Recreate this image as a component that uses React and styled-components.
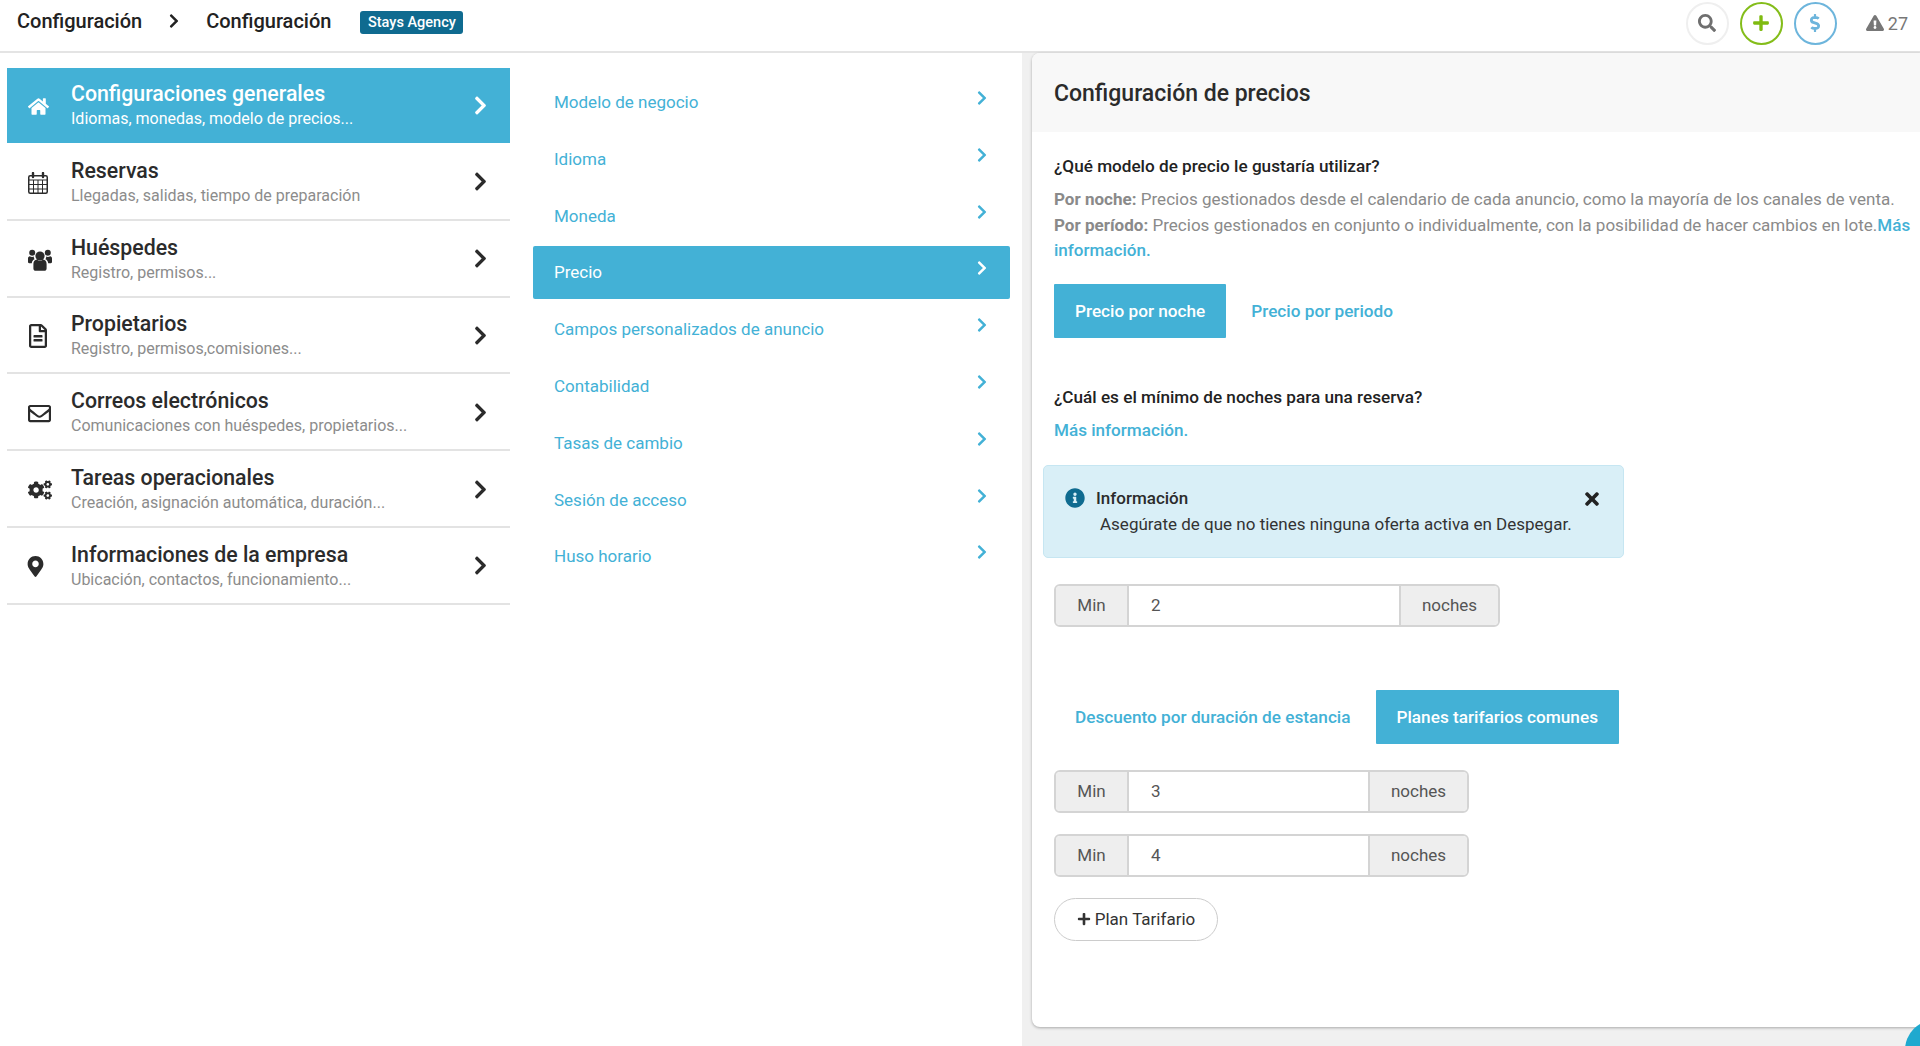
import React from 'react';
import styled, { createGlobalStyle } from 'styled-components';
import {
    FaHome, FaRegFileAlt, FaRegEnvelope, FaCogs, FaMapMarkerAlt,
    FaChevronRight, FaInfoCircle, FaTimes, FaPlus, FaSearch, FaDollarSign, FaExclamationTriangle,
} from 'react-icons/fa';

const BLUE = '#43b1d6';

const GlobalStyle = createGlobalStyle`
    html, body {
        margin: 0;
        padding: 0;
        background: #fff;
        font-family: Roboto, "Liberation Sans", sans-serif;
        color: #2b2b2b;
    }
    * { box-sizing: border-box; }
`;

const Page = styled.div`
    width: 1920px;
    height: 1046px;
    display: flex;
    flex-direction: column;
    overflow: hidden;
    position: relative;
`;

const Header = styled.header`
    height: 53px;
    flex: none;
    display: flex;
    align-items: center;
    padding: 0 12px 5px 17px;
    border-bottom: 2px solid #e4e4e4;
`;

const Crumb = styled.span`
    font-size: 20px;
    font-weight: 500;
    color: #222;
    position: relative;
    top: -2px;
`;

const CrumbArrow = styled(FaChevronRight)`
    font-size: 16px;
    color: #222;
    margin: 0 24px;
    position: relative;
    top: -2px;
`;

const Badge = styled.span`
    margin-left: 29px;
    width: 103px;
    height: 23px;
    display: flex;
    align-items: center;
    justify-content: center;
    background: #0f6b90;
    border-radius: 3px;
    color: #fff;
    font-size: 14.5px;
    font-weight: 500;
    position: relative;
    top: -1px;
`;

const HeaderRight = styled.div`
    margin-left: auto;
    display: flex;
    align-items: center;
`;

const RoundButton = styled.div`
    width: 43px;
    height: 43px;
    margin-left: ${(p) => p.$gap}px;
    border-radius: 50%;
    border: 2px solid ${(p) => p.$ring};
    color: ${(p) => p.$color};
    display: flex;
    align-items: center;
    justify-content: center;
    font-size: 18px;
`;

const Alerts = styled.div`
    margin-left: 29px;
    display: flex;
    align-items: center;
    gap: 4px;
    color: #777;
    font-size: 18px;
`;

const Body = styled.div`
    flex: 1;
    display: flex;
    min-height: 0;
`;

const MainMenu = styled.nav`
    width: 503px;
    margin-left: 7px;
    padding-top: 15px;
    flex: none;
`;

const MenuItem = styled.div`
    height: ${(p) => (p.$active ? 75 : 76.8)}px;
    margin-bottom: ${(p) => (p.$active ? 1 : 0)}px;
    display: flex;
    align-items: center;
    padding: ${(p) => (p.$active ? 0 : 3)}px 19px 0 21px;
    background: ${(p) => (p.$active ? BLUE : '#fff')};
    border-bottom: ${(p) => (p.$active ? 'none' : '2px solid #e3e3e3')};
    color: ${(p) => (p.$active ? '#fff' : '#2b2b2b')};
`;

const MenuIcon = styled.div`
    width: 43px;
    flex: none;
    display: flex;
    font-size: ${(p) => p.$size || 21}px;
    margin-left: ${(p) => p.$shift || 0}px;
    margin-right: ${(p) => -(p.$shift || 0)}px;
    position: relative;
    top: ${(p) => (p.$active ? 1 : 0)}px;
`;

const MenuText = styled.div`
    flex: 1;
    min-width: 0;
`;

const MenuTitle = styled.div`
    font-size: 21.3px;
    font-weight: 500;
    line-height: 26px;
`;

const MenuSub = styled.div`
    font-size: 16px;
    line-height: 24px;
    color: ${(p) => (p.$active ? '#fff' : '#8c8c8c')};
`;

const MenuArrow = styled(FaChevronRight)`
    font-size: 21px;
    flex: none;
    position: relative;
    top: ${(p) => (p.$active ? 0 : -1)}px;
`;

const SubMenu = styled.nav`
    width: 477px;
    margin-left: 23px;
    padding-top: 22.5px;
    flex: none;
    display: flex;
    flex-direction: column;
    gap: 3.8px;
`;

const SubItem = styled.div`
    height: 53px;
    display: flex;
    align-items: center;
    justify-content: space-between;
    padding: 0 20px 0 21px;
    border-radius: 2px;
    font-size: 17px;
    background: ${(p) => (p.$active ? BLUE : 'transparent')};
    color: ${(p) => (p.$active ? '#fff' : BLUE)};
`;

const SubArrow = styled(FaChevronRight)`
    font-size: 16px;
    position: relative;
    top: -4px;
`;

const RightSide = styled.div`
    flex: 1;
    margin-left: 12px;
    padding: 0 0 19px 10px;
    background: #f0f0f0;
    min-width: 0;
`;

const Panel = styled.section`
    height: 100%;
    background: #fff;
    border-radius: 8px 0 0 8px;
    box-shadow: 0 1px 3px rgba(0, 0, 0, 0.3);
`;

const PanelHeader = styled.div`
    height: 79px;
    display: flex;
    align-items: center;
    padding: 1px 0 0 22px;
    background: #f8f8f8;
    border-radius: 8px 0 0 0;
    font-size: 23px;
    font-weight: 500;
    color: #2b2b2b;
`;

const PanelBody = styled.div`
    padding: 22px 5px 0 22px;
`;

const Question = styled.div`
    margin-top: ${(p) => p.$top || 0}px;
    font-size: 17.15px;
    font-weight: 500;
    line-height: 25px;
    color: #222;
`;

const Help = styled.p`
    margin: 8px 0 0;
    font-size: 17.05px;
    line-height: 25.5px;
    color: #8a8a8a;
    b { font-weight: 700; color: #8a8a8a; }
`;

const InfoLink = styled.a`
    color: ${BLUE};
    font-weight: 500;
    text-decoration: none;
`;

const LinkLine = styled.div`
    margin-top: 8px;
    font-size: 17.1px;
    line-height: 25px;
`;

const Tabs = styled.div`
    display: flex;
    align-items: stretch;
    margin-top: ${(p) => p.$top}px;
    gap: ${(p) => p.$gap}px;
`;

const Tab = styled.div`
    height: 54px;
    display: flex;
    align-items: center;
    justify-content: center;
    padding: 0 21px;
    font-size: 17.2px;
    font-weight: 500;
    border-radius: 1px;
    background: ${(p) => (p.$active ? BLUE : 'transparent')};
    color: ${(p) => (p.$active ? '#fff' : BLUE)};
`;

const Alert = styled.div`
    width: 581px;
    height: 93px;
    margin: 22px 0 0 -11px;
    padding: 21px 22px 0 21px;
    background: #d9eff7;
    border: 1px solid #c6e6f2;
    border-radius: 5px;
    position: relative;
`;

const AlertTitle = styled.div`
    display: flex;
    align-items: center;
    gap: 11px;
    font-size: 17px;
    font-weight: 500;
    line-height: 22px;
    color: #2b2b2b;
`;

const AlertIcon = styled(FaInfoCircle)`
    font-size: 20px;
    color: #0f6b90;
`;

const AlertClose = styled(FaTimes)`
    position: absolute;
    top: 23px;
    right: 21px;
    font-size: 20px;
    color: #222;
`;

const AlertText = styled.div`
    margin: 4px 0 0 35px;
    font-size: 17px;
    line-height: 22px;
    color: #333;
`;

const InputGroup = styled.div`
    width: ${(p) => p.$width}px;
    height: 43px;
    margin-top: ${(p) => p.$top}px;
    display: flex;
    border: 2px solid #d4d4d4;
    border-radius: 6px;
    overflow: hidden;
    font-size: 17px;
    color: #555;
`;

const Addon = styled.div`
    width: ${(p) => p.$width}px;
    flex: none;
    display: flex;
    align-items: center;
    justify-content: center;
    background: #eee;
`;

const NumberField = styled.div`
    flex: 1;
    display: flex;
    align-items: center;
    padding-left: 22px;
    background: #fff;
    border-left: 2px solid #d4d4d4;
    border-right: 2px solid #d4d4d4;
`;

const PillButton = styled.div`
    width: 164px;
    height: 43px;
    margin-top: 21px;
    display: flex;
    align-items: center;
    justify-content: center;
    gap: 4px;
    border: 1px solid #ccc;
    border-radius: 22px;
    background: #fff;
    font-size: 17px;
    color: #333;
`;

const FloatingButton = styled.div`
    position: absolute;
    left: 1905px;
    top: 1020px;
    width: 60px;
    height: 60px;
    border-radius: 50%;
    background: #1fa9cf;
`;

// Font Awesome 4 calendar, the package only has the newer shape
const CalendarIcon = () => (
    <svg width="20" height="22" viewBox="0 0 20 22" fill="none" stroke="currentColor">
        <rect x="0.75" y="3.75" width="18.5" height="17.5" rx="1.5" strokeWidth="1.5" />
        <path d="M1 8h18M1 12.5h18M1 17h18M5.5 8v13M10 8v13M14.5 8v13" strokeWidth="1" />
        <path d="M5 1v4M15 1v4" strokeWidth="2.4" strokeLinecap="round" />
    </svg>
);

const GroupIcon = () => (
    <svg width="24" height="22" viewBox="0 0 24 22" fill="currentColor">
        <circle cx="12" cy="7" r="4.6" />
        <circle cx="4.2" cy="3.8" r="3" />
        <circle cx="19.8" cy="3.8" r="3" />
        <path d="M5.4 15c0-2.8 1.6-4.2 3.4-4.4 1 .8 2 1.2 3.2 1.2s2.2-.4 3.2-1.2c1.8.2 3.4 1.6 3.4 4.4v4.4c0 1.4-1 2.3-2.4 2.3H7.8c-1.4 0-2.4-.9-2.4-2.3z" />
        <path d="M0 9.4C0 8 .8 7.4 1.8 7.2c.7.5 1.5.8 2.4.8.6 0 1.2-.1 1.7-.4-.2 1 .1 1.9.7 2.6-1.6.6-2.6 2-2.8 4H1.2C.5 14.2 0 13.700 0 13z" />
        <path d="M24 9.400C24 8 23.200 7.400 22.200 7.200c-.7.5-1.500.8-2.400.8-.6 0-1.200-.1-1.700-.4.2 1-.1 1.900-.7 2.600 1.600.6 2.600 2 2.800 4h2.600c.7 0 1.200-.5 1.200-1.200z" />
    </svg>
);

const mainItems = [
    { icon: FaHome, title: 'Configuraciones generales', sub: 'Idiomas, monedas, modelo de precios...', active: true },
    { icon: CalendarIcon, title: 'Reservas', sub: 'Llegadas, salidas, tiempo de preparación' },
    { icon: GroupIcon, title: 'Huéspedes', sub: 'Registro, permisos...' },
    { icon: FaRegFileAlt, title: 'Propietarios', sub: 'Registro, permisos,comisiones...', size: 24, shift: -2 },
    { icon: FaRegEnvelope, title: 'Correos electrónicos', sub: 'Comunicaciones con huéspedes, propietarios...', size: 23 },
    { icon: FaCogs, title: 'Tareas operacionales', sub: 'Creación, asignación automática, duración...', size: 24 },
    { icon: FaMapMarkerAlt, title: 'Informaciones de la empresa', sub: 'Ubicación, contactos, funcionamiento...', size: 21, shift: -3 },
];

const subItems = [
    'Modelo de negocio',
    'Idioma',
    'Moneda',
    'Precio',
    'Campos personalizados de anuncio',
    'Contabilidad',
    'Tasas de cambio',
    'Sesión de acceso',
    'Huso horario',
];

const MinNights = ({ value, width, top }) => (
    <InputGroup $width={width} $top={top}>
        <Addon $width={71}>Min</Addon>
        <NumberField>{value}</NumberField>
        <Addon $width={97}>noches</Addon>
    </InputGroup>
);

const App = () => (
    <Page>
        <GlobalStyle />
        <Header>
            <Crumb>Configuración</Crumb>
            <CrumbArrow />
            <Crumb>Configuración</Crumb>
            <Badge>Stays Agency</Badge>
            <HeaderRight>
                <RoundButton $ring="#efefef" $color="#6f6f6f" $gap={0}><FaSearch /></RoundButton>
                <RoundButton $ring="#84bd1a" $color="#7fbb10" $gap={11}><FaPlus /></RoundButton>
                <RoundButton $ring="#6db5dc" $color="#6db5dc" $gap={11}><FaDollarSign /></RoundButton>
                <Alerts><FaExclamationTriangle />27</Alerts>
            </HeaderRight>
        </Header>
        <Body>
            <MainMenu>
                {mainItems.map(({ icon: Icon, title, sub, active, size, shift }) => (
                    <MenuItem key={title} $active={active}>
                        <MenuIcon $size={size} $shift={shift} $active={active}><Icon /></MenuIcon>
                        <MenuText>
                            <MenuTitle>{title}</MenuTitle>
                            <MenuSub $active={active}>{sub}</MenuSub>
                        </MenuText>
                        <MenuArrow $active={active} />
                    </MenuItem>
                ))}
            </MainMenu>
            <SubMenu>
                {subItems.map((item) => (
                    <SubItem key={item} $active={item === 'Precio'}>
                        {item}
                        <SubArrow />
                    </SubItem>
                ))}
            </SubMenu>
            <RightSide>
                <Panel>
                    <PanelHeader>Configuración de precios</PanelHeader>
                    <PanelBody>
                        <Question>¿Qué modelo de precio le gustaría utilizar?</Question>
                        <Help>
                            <b>Por noche:</b> Precios gestionados desde el calendario de cada anuncio, como la mayoría de los canales de venta.
                            <br />
                            <b>Por período:</b> Precios gestionados en conjunto o individualmente, con la posibilidad de hacer cambios en lote.<InfoLink>Más información.</InfoLink>
                        </Help>
                        <Tabs $top={20} $gap={4}>
                            <Tab $active>Precio por noche</Tab>
                            <Tab>Precio por periodo</Tab>
                        </Tabs>
                        <Question $top={47}>¿Cuál es el mínimo de noches para una reserva?</Question>
                        <LinkLine><InfoLink>Más información.</InfoLink></LinkLine>
                        <Alert>
                            <AlertTitle><AlertIcon />Información</AlertTitle>
                            <AlertText>Asegúrate de que no tienes ninguna oferta activa en Despegar.</AlertText>
                            <AlertClose />
                        </Alert>
                        <MinNights value="2" width={446} top={26} />
                        <Tabs $top={63} $gap={4}>
                            <Tab>Descuento por duración de estancia</Tab>
                            <Tab $active>Planes tarifarios comunes</Tab>
                        </Tabs>
                        <MinNights value="3" width={415} top={26} />
                        <MinNights value="4" width={415} top={21} />
                        <PillButton><FaPlus size={14} />Plan Tarifario</PillButton>
                    </PanelBody>
                </Panel>
            </RightSide>
        </Body>
        <FloatingButton />
    </Page>
);

export default App;
